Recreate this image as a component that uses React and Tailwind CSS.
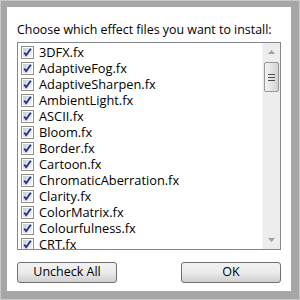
import React from "react";

const items = [
  "3DFX.fx",
  "AdaptiveFog.fx",
  "AdaptiveSharpen.fx",
  "AmbientLight.fx",
  "ASCII.fx",
  "Bloom.fx",
  "Border.fx",
  "Cartoon.fx",
  "ChromaticAberration.fx",
  "Clarity.fx",
  "ColorMatrix.fx",
  "Colourfulness.fx",
  "CRT.fx",
];

function Check() {
  return (
    <svg width="13" height="13" viewBox="0 0 13 13" className="shrink-0">
      <defs>
        <linearGradient id="cbg" x1="0" y1="0" x2="1" y2="1">
          <stop offset="0" stopColor="#cbcfd5" />
          <stop offset="1" stopColor="#f6f6f6" />
        </linearGradient>
      </defs>
      <rect x="0.5" y="0.5" width="12" height="12" fill="#fff" stroke="#8e8f8f" />
      <rect x="2" y="2" width="9" height="9" fill="url(#cbg)" />
      <path d="M3.2 6.6 L5.2 9.2 L9.8 2.8" fill="none" stroke="#24338a" strokeWidth="1.9" />
    </svg>
  );
}

export default function App() {
  return (
    <div
      className="w-[300px] h-[300px] bg-[#c9c9c9] p-[1px] overflow-hidden"
      style={{ fontFamily: '"Open Sans", "Noto Sans", sans-serif' }}
    >
      <div className="w-full h-full bg-[#a6a6a6] pt-[6px] pl-[6px] pr-[8px] pb-[8px]">
        <div className="w-full h-full bg-white flex flex-col px-[10px]">
          <div className="text-[12.4px] leading-[16px] text-black mt-[15px] whitespace-nowrap">
            Choose which effect files you want to install:
          </div>
          <div className="mt-[4px] h-[208px] border border-[#828790] flex">
            <div className="flex-1 flex flex-col pl-[3px] pt-[1px] overflow-hidden">
              {items.map((t) => (
                <div key={t} className="h-[16px] shrink-0 flex items-center gap-[5px]">
                  <Check />
                  <span className="text-[12.8px] leading-[16px] text-black whitespace-nowrap">{t}</span>
                </div>
              ))}
            </div>
            <div className="w-[18px] bg-[#ededed] flex flex-col items-center border-l border-[#f4f4f4]">
              <div className="h-[18px] flex items-center justify-center">
                <svg width="7" height="4" viewBox="0 0 7 4"><path d="M3.5 0 L7 4 L0 4 Z" fill="#a0a0a0" /></svg>
              </div>
              <div className="mt-[1px] w-[15px] h-[30px] rounded-[2px] border border-[#979797] bg-gradient-to-r from-[#f2f2f2] via-[#e4e4e4] to-[#d2d2d2] flex flex-col items-center justify-center gap-[2px]">
                <div className="w-[7px] h-[1px] bg-[#4d4d4d]" />
                <div className="w-[7px] h-[1px] bg-[#4d4d4d]" />
                <div className="w-[7px] h-[1px] bg-[#4d4d4d]" />
              </div>
              <div className="flex-1" />
              <div className="h-[18px] flex items-center justify-center">
                <svg width="7" height="4" viewBox="0 0 7 4"><path d="M0 0 L7 0 L3.5 4 Z" fill="#a0a0a0" /></svg>
              </div>
            </div>
          </div>
          <div className="mt-[12px] flex justify-between">
            <button className="w-[100px] h-[21px] rounded-[3px] border border-[#707070] bg-gradient-to-b from-[#f2f2f2] via-[#ebebeb] to-[#cfcfcf] text-[12.5px] text-black">
              Uncheck All
            </button>
            <button className="w-[100px] h-[21px] rounded-[3px] border border-[#707070] bg-gradient-to-b from-[#f2f2f2] via-[#ebebeb] to-[#cfcfcf] text-[12.5px] text-black">
              OK
            </button>
          </div>
        </div>
      </div>
    </div>
  );
}
